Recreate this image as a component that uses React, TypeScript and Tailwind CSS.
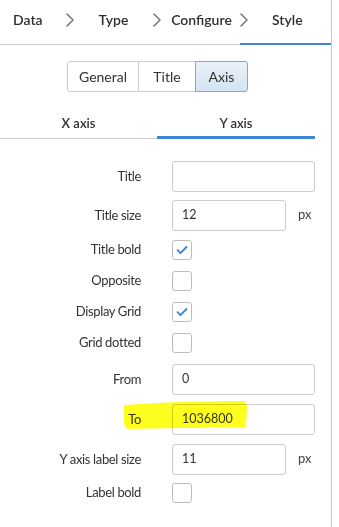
import React from 'react';

const Chevron = ({ className = '' }: { className?: string }) => (
  <svg width="8" height="14" viewBox="0 0 8 14" className={className} fill="none">
    <path d="M1 1l6 6-6 6" stroke="#7a7a7a" strokeWidth="1.6" strokeLinecap="round" strokeLinejoin="round" />
  </svg>
);

const Checkbox = ({ checked = false }: { checked?: boolean }) => (
  <div className="w-[20px] h-[20px] rounded-[3px] border border-[#bdbdbd] bg-white flex items-center justify-center">
    {checked && (
      <svg width="12" height="10" viewBox="0 0 12 10" fill="none">
        <path d="M1.5 5.2l3 3L10.5 2" stroke="#3b82d6" strokeWidth="1.8" strokeLinecap="round" strokeLinejoin="round" />
      </svg>
    )}
  </div>
);

const Label = ({ children }: { children: React.ReactNode }) => (
  <div className="w-[141px] text-right text-[13px] tracking-[-0.35px] text-[#333]">{children}</div>
);

function InputRow({ label, value = '', unit, mt }: { label: string; value?: string; unit?: string; mt: string }) {
  return (
    <div className={`flex items-center h-[31px] ${mt}`}>
      <Label>{label}</Label>
      <div
        className={`ml-[31px] h-[31px] rounded-[3px] border border-[#cccccc] bg-white flex items-center pl-[9px] text-[12.5px] text-[#333] ${
          unit ? 'w-[114px]' : 'w-[143px]'
        }`}
      >
        {value}
      </div>
      {unit && <span className="ml-[12px] text-[13px] text-[#444] -mt-[2px]">{unit}</span>}
    </div>
  );
}

function CheckRow({ label, checked, mt }: { label: string; checked?: boolean; mt: string }) {
  return (
    <div className={`flex items-center h-[20px] ${mt}`}>
      <Label>{label}</Label>
      <div className="ml-[31px]">
        <Checkbox checked={checked} />
      </div>
    </div>
  );
}

export default function App() {
  const steps = ['Data', 'Type', 'Configure'];

  return (
    <div className="w-[339px] h-[527px] bg-white" style={{ fontFamily: 'Lato, "Open Sans", sans-serif' }}>
      <div className="w-[332px] h-full border-r border-[#cccccc]">
        {/* Wizard steps */}
        <div className="flex h-[45px] border-b border-[#cccccc] text-[14px] font-semibold text-[#2f2f2f]">
          <div className="w-[66px] pl-[13px] pt-[9px]">{steps[0]}</div>
          <Chevron className="mt-[13px]" />
          <div className="w-[79px] text-center pt-[9px]">{steps[1]}</div>
          <Chevron className="mt-[13px]" />
          <div className="w-[81px] text-center pt-[9px]">{steps[2]}</div>
          <div className="flex-1 flex border-b-2 border-[#3d87da] -mb-px -ml-[2px]">
            <Chevron className="mt-[13px]" />
            <div className="pl-[24px] pt-[9px]">Style</div>
          </div>
        </div>

        <div className="w-[315px]">
          {/* Segmented control */}
          <div className="flex justify-center mt-[16px]">
            <div className="flex h-[31px] text-[14px] text-[#333]">
              <div className="w-[72px] flex items-center justify-center border border-[#cccccc] rounded-l-[3px] bg-white">General</div>
              <div className="w-[56px] flex items-center justify-center border-y border-[#cccccc] bg-white">Title</div>
              <div className="w-[53px] flex items-center justify-center border border-[#7fa9d8] rounded-r-[3px] bg-gradient-to-b from-[#eaf1fa] to-[#d4e3f4]">Axis</div>
            </div>
          </div>

          {/* Axis tabs */}
          <div className="flex items-end h-[39px] mt-[8px] text-[13px] font-semibold text-[#2f2f2f]">
            <div className="w-[157px] h-full flex items-center justify-center border-b border-[#cccccc] pt-[10px]">X axis</div>
            <div className="flex-1 h-full flex items-center justify-center border-b-[3px] border-[#3d87da] pt-[12px]">Y axis</div>
          </div>

          {/* Form */}
          <div className="flex flex-col">
            <InputRow label="Title" mt="mt-[22px]" />
            <InputRow label="Title size" value="12" unit="px" mt="mt-[8px]" />
            <CheckRow label="Title bold" checked mt="mt-[9px]" />
            <CheckRow label="Opposite" mt="mt-[11px]" />
            <CheckRow label="Display Grid" checked mt="mt-[11px]" />
            <CheckRow label="Grid dotted" mt="mt-[11px]" />
            <InputRow label="From" value="0" mt="mt-[11px]" />
            <div className="relative">
              <InputRow label="To" value="1036800" mt="mt-[9px]" />
              <svg
                className="absolute left-[122px] top-[5px] mix-blend-multiply pointer-events-none"
                width="126"
                height="30"
                viewBox="0 0 126 30"
              >
                <path
                  d="M2 5 C30 3 70 1 123 1 L125 6 L124 27 C90 28 40 28 5 29 L2 24 Z"
                  fill="#ffff1f"
                />
              </svg>
            </div>
            <InputRow label="Y axis label size" value="11" unit="px" mt="mt-[9px]" />
            <CheckRow label="Label bold" mt="mt-[8px]" />
          </div>
        </div>
      </div>
    </div>
  );
}
